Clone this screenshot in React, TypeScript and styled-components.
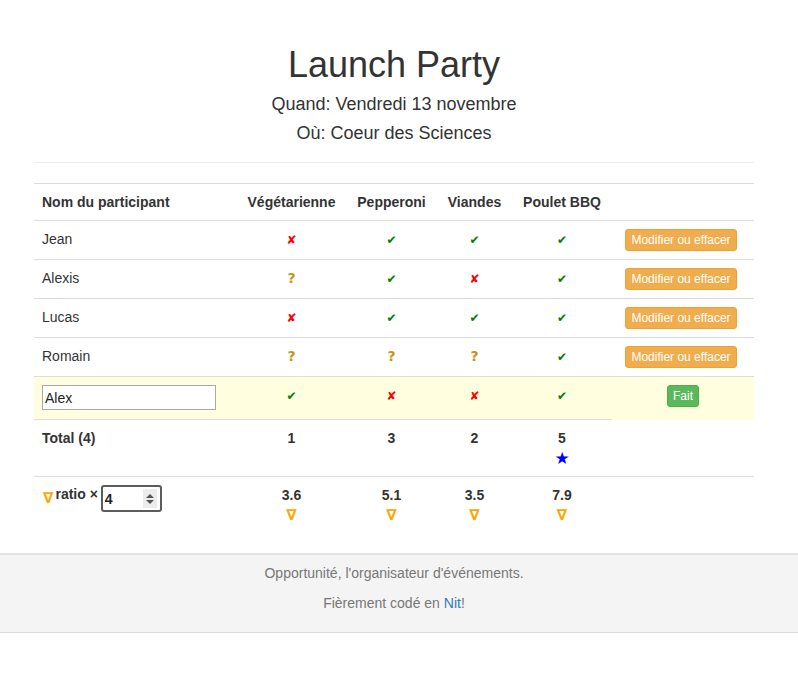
import React from 'react';
import styled, { createGlobalStyle, css } from 'styled-components';

type Answer = 'yes' | 'no' | 'maybe';

interface Guest {
  name: string;
  answers: Answer[];
}

const pizzas = ['Végétarienne', 'Pepperoni', 'Viandes', 'Poulet BBQ'];
const colWidths = [203, 109, 91, 75, 100, 142];

const guests: Guest[] = [
  { name: 'Jean', answers: ['no', 'yes', 'yes', 'yes'] },
  { name: 'Alexis', answers: ['maybe', 'yes', 'no', 'yes'] },
  { name: 'Lucas', answers: ['no', 'yes', 'yes', 'yes'] },
  { name: 'Romain', answers: ['maybe', 'maybe', 'maybe', 'yes'] },
];

const editing: Answer[] = ['yes', 'no', 'no', 'yes'];
const totals = [1, 3, 2, 5];
const ratios = ['3.6', '5.1', '3.5', '7.9'];

const GlobalStyle = createGlobalStyle`
  body {
    margin: 0;
    font-family: 'Liberation Sans', Arial, sans-serif;
    font-size: 14px;
    line-height: 20px;
    color: #333;
    background: #fff;
  }
`;

const Container = styled.div`
  width: 720px;
  margin-left: calc(50% - 365px);
`;

const Header = styled.header`
  padding: 45px 0 8px;
  margin-bottom: 20px;
  border-bottom: 1px solid #eee;
  text-align: center;
`;

const Title = styled.h1`
  margin: 0 0 10px;
  font-size: 36px;
  font-weight: 500;
  line-height: 1.1;
`;

const Subtitle = styled.h4`
  margin: 0 0 10px;
  font-size: 18px;
  font-weight: 500;
  line-height: 1.1;
`;

const Table = styled.table`
  width: 720px;
  table-layout: fixed;
  border-collapse: collapse;
  margin-bottom: 20px;
`;

const HeadCell = styled.th<{ $left?: boolean }>`
  padding: 8px;
  text-align: ${(p) => (p.$left ? 'left' : 'center')};
  font-weight: bold;
  border-top: 1px solid #ddd;
  border-bottom: 1px solid #ddd;
  vertical-align: bottom;
`;

const Row = styled.tr<{ $highlight?: boolean }>`
  ${(p) =>
    p.$highlight &&
    css`
      background: #ffffe0;
    `}
`;

const Cell = styled.td<{ $left?: boolean; $bold?: boolean }>`
  padding: 8px;
  border-top: 1px solid #ddd;
  text-align: ${(p) => (p.$left ? 'left' : 'center')};
  font-weight: ${(p) => (p.$bold ? 'bold' : 'normal')};
  vertical-align: top;
`;

const markColors: Record<Answer, string> = {
  yes: '#008000',
  no: '#ff0000',
  maybe: '#cc9214',
};

const Mark = styled.span<{ $kind: Answer }>`
  font-family: 'DejaVu Sans', sans-serif;
  font-size: ${(p) => (p.$kind === 'maybe' ? '14px' : '12px')};
  font-weight: bold;
  color: ${(p) => markColors[p.$kind]};
`;

const SmallButton = styled.button<{ $variant: 'warning' | 'success' }>`
  font-family: 'Liberation Sans', Arial, sans-serif;
  font-size: 12px;
  line-height: 18px;
  padding: 1px 5px;
  border-radius: 3px;
  color: #fff;
  cursor: pointer;
  background: ${(p) => (p.$variant === 'warning' ? '#f0ad4e' : '#5cb85c')};
  border: 1px solid ${(p) => (p.$variant === 'warning' ? '#eea236' : '#4cae4c')};
  margin-right: ${(p) => (p.$variant === 'warning' ? '4px' : '0')};
`;

const NameInput = styled.input`
  box-sizing: border-box;
  width: 174px;
  height: 25px;
  margin: 0 0 1px;
  padding: 1px 2px;
  border: 1px solid #a9a9a9;
  font-family: 'Liberation Sans', Arial, sans-serif;
  font-size: 14px;
  color: #222;
  vertical-align: top;
`;

const RatioField = styled.span`
  position: relative;
  display: inline-block;
  vertical-align: top;
  margin-left: 3px;
`;

const RatioInput = styled.input`
  box-sizing: border-box;
  width: 61px;
  height: 27px;
  padding: 1px 2px;
  border: 2px solid #5c5c5c;
  border-radius: 3px;
  font-family: 'Liberation Sans', Arial, sans-serif;
  font-size: 14px;
  font-weight: bold;
  color: #222;
  outline: none;
  -moz-appearance: textfield;

  &::-webkit-inner-spin-button,
  &::-webkit-outer-spin-button {
    -webkit-appearance: none;
    margin: 0;
  }
`;

const Spinner = styled.span`
  position: absolute;
  top: 4px;
  right: 5px;
  width: 14px;
  height: 19px;
  background: #ececec;
  display: flex;
  flex-direction: column;
  align-items: center;
  justify-content: center;
  gap: 2px;
`;

const SpinArrow = styled.span<{ $down?: boolean }>`
  width: 0;
  height: 0;
  border-left: 4px solid transparent;
  border-right: 4px solid transparent;
  ${(p) =>
    p.$down
      ? css`
          border-top: 4px solid #555;
        `
      : css`
          border-bottom: 4px solid #555;
        `}
`;

const Star = styled.span`
  display: block;
  font-family: 'DejaVu Sans', sans-serif;
  font-size: 17px;
  color: #0000ff;
`;

const Nabla = styled.span<{ $block?: boolean }>`
  display: ${(p) => (p.$block ? 'block' : 'inline-block')};
  margin: ${(p) => (p.$block ? '0' : '3px 0 0 1px')};
  vertical-align: top;
  font-family: 'DejaVu Sans', sans-serif;
  font-size: 15px;
  font-weight: bold;
  color: #ffa500;
`;

const RatioLabel = styled.span`
  display: inline-block;
  vertical-align: top;
  font-weight: bold;
  margin: -1px 0 0 2px;
`;

const Footer = styled.footer`
  background: #f4f4f4;
  border-top: 2px solid #e2e2e2;
  border-bottom: 1px solid #ddd;
  padding: 8px 0 9px;
  text-align: center;
  color: #777;
`;

const FooterLine = styled.p`
  margin: 0 0 10px;
`;

const FooterLink = styled.a`
  color: #337ab7;
  text-decoration: none;
`;

const answerGlyph = (a: Answer) => (a === 'yes' ? '✔' : a === 'no' ? '✘' : '?');

const App: React.FC = () => {
  return (
    <>
      <GlobalStyle />
      <Container>
        <Header>
          <Title>Launch Party</Title>
          <Subtitle>Quand: Vendredi 13 novembre</Subtitle>
          <Subtitle>Où: Coeur des Sciences</Subtitle>
        </Header>
        <Table>
          <colgroup>
            {colWidths.map((w, i) => (
              <col key={i} style={{ width: w }} />
            ))}
          </colgroup>
          <thead>
            <tr>
              <HeadCell $left>Nom du participant</HeadCell>
              {pizzas.map((p) => (
                <HeadCell key={p}>{p}</HeadCell>
              ))}
              <HeadCell />
            </tr>
          </thead>
          <tbody>
            {guests.map((g) => (
              <Row key={g.name}>
                <Cell $left>{g.name}</Cell>
                {g.answers.map((a, i) => (
                  <Cell key={i}>
                    <Mark $kind={a}>{answerGlyph(a)}</Mark>
                  </Cell>
                ))}
                <Cell>
                  <SmallButton $variant="warning">Modifier ou effacer</SmallButton>
                </Cell>
              </Row>
            ))}
            <Row $highlight>
              <Cell $left>
                <NameInput defaultValue="Alex" />
              </Cell>
              {editing.map((a, i) => (
                <Cell key={i}>
                  <Mark $kind={a}>{answerGlyph(a)}</Mark>
                </Cell>
              ))}
              <Cell>
                <SmallButton $variant="success">Fait</SmallButton>
              </Cell>
            </Row>
            <tr>
              <Cell $left $bold>
                Total (4)
              </Cell>
              {totals.map((t, i) => (
                <Cell key={i} $bold>
                  {t}
                  {i === 3 && <Star>★</Star>}
                </Cell>
              ))}
            </tr>
            <tr>
              <Cell $left>
                <Nabla>∇</Nabla>
                <RatioLabel>ratio ×</RatioLabel>
                <RatioField>
                  <RatioInput type="number" defaultValue={4} />
                  <Spinner>
                    <SpinArrow />
                    <SpinArrow $down />
                  </Spinner>
                </RatioField>
              </Cell>
              {ratios.map((r) => (
                <Cell key={r} $bold>
                  {r}
                  <Nabla $block>∇</Nabla>
                </Cell>
              ))}
              <Cell />
            </tr>
          </tbody>
        </Table>
      </Container>
      <Footer>
        <Container>
          <FooterLine>Opportunité, l'organisateur d'événements.</FooterLine>
          <FooterLine>
            Fièrement codé en <FooterLink href="#">Nit</FooterLink>!
          </FooterLine>
        </Container>
      </Footer>
    </>
  );
};

export default App;
